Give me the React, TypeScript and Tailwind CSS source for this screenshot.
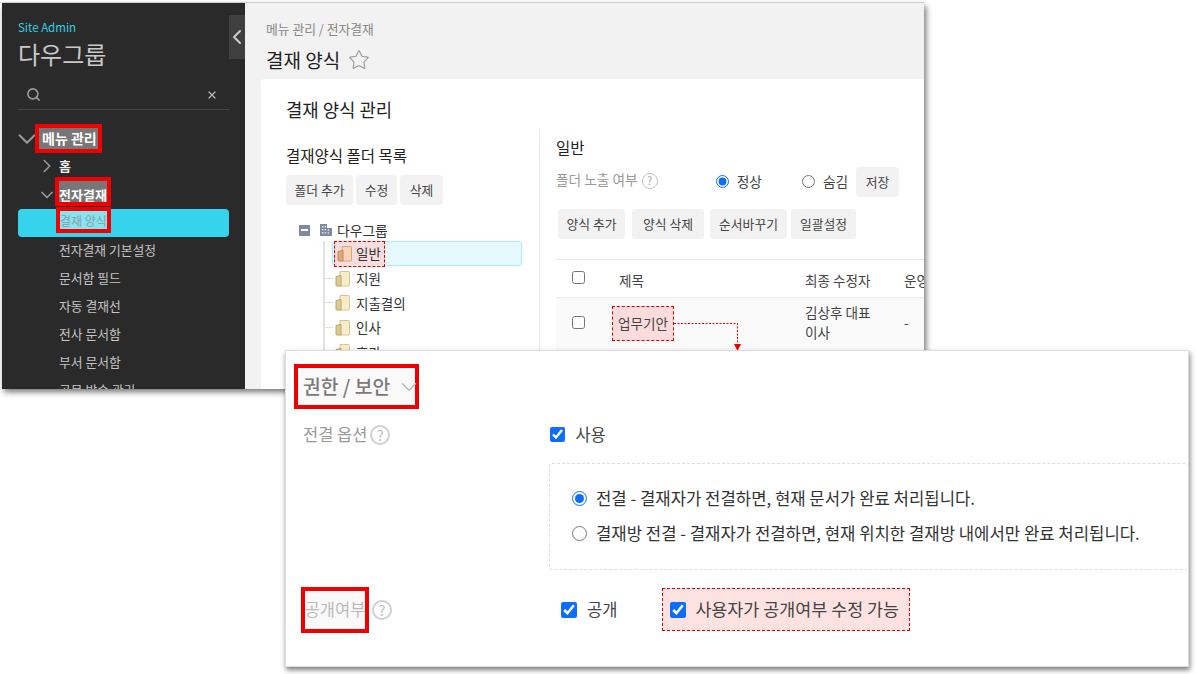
import React from "react";
import { ChevronDown, ChevronLeft, ChevronRight, Search, Star, X } from "lucide-react";

const font = { fontFamily: '"Noto Sans CJK KR", "Noto Sans", sans-serif' };

const GrayButton = ({ label, className }: { label: string; className: string }) => (
  <button type="button" className={`h-[30px] rounded-[4px] bg-[#f2f2f2] text-[12.8px] text-[#444] ${className}`}>
    {label}
  </button>
);

const Help = ({ size = "md" }: { size?: "sm" | "md" }) => (
  <span
    className={
      size === "sm"
        ? "inline-flex h-[16px] w-[16px] items-center justify-center rounded-full border border-[#c4c4c4] text-[11px] leading-none text-[#aaa]"
        : "inline-flex h-[20px] w-[20px] items-center justify-center rounded-full border-2 border-[#d0d0d0] text-[14px] leading-none text-[#bbb]"
    }
  >
    ?
  </span>
);

const FolderIcon = ({ active }: { active?: boolean }) => (
  <svg width="16" height="17" viewBox="0 0 16 17" className="shrink-0">
    <path d="M5 1.5h8.5a1 1 0 0 1 1 1V15a1 1 0 0 1-1 1H5z" fill={active ? "#f6d3b4" : "#f8edc8"} stroke={active ? "#d2a680" : "#d2c498"} />
    <path d="M1 6.5l5-1V16H2a1 1 0 0 1-1-1z" fill={active ? "#e3a878" : "#dcc98c"} stroke={active ? "#c08a60" : "#b9a670"} />
  </svg>
);

const BuildingIcon = () => (
  <svg width="14" height="14" viewBox="0 0 14 14" className="shrink-0">
    <path d="M1 1h7v4h5v8H1z" fill="#7f8aa0" />
    <g fill="#e6e8ee">
      <rect x="3" y="3" width="1.4" height="1.4" />
      <rect x="5.6" y="3" width="1.4" height="1.4" />
      <rect x="3" y="6" width="1.4" height="1.4" />
      <rect x="5.6" y="6" width="1.4" height="1.4" />
      <rect x="8.6" y="6.5" width="1.4" height="1.4" />
      <rect x="3" y="9" width="1.4" height="1.4" />
      <rect x="5.6" y="9" width="1.4" height="1.4" />
      <rect x="8.6" y="9.5" width="1.4" height="1.4" />
    </g>
  </svg>
);

const treeItems = ["지원", "지출결의", "인사", "휴가"];
const sideItems = ["전자결재 기본설정", "문서함 필드", "자동 결재선", "전사 문서함", "부서 문서함", "공문 발송 관리"];

const Sidebar = () => (
  <aside className="h-full w-[243px] shrink-0 overflow-hidden bg-[#2a2a2a] pl-[16px] pr-[16px]">
    <div className="pt-[15px] text-[11.5px] leading-[18px] text-[#36cfe4]">Site Admin</div>
    <div className="text-[24px] leading-[36px] text-[#c9c9c9]">다우그룹</div>
    <div className="mt-[8px] flex h-[30px] items-center justify-between border-b border-[#444] pl-[8px] pr-[11px]">
      <Search size={15} strokeWidth={2.6} className="text-[#9a9a9a]" />
      <X size={12} strokeWidth={2.5} className="text-[#b5b5b5]" />
    </div>
    <div className="mt-[14px] flex h-[29px] items-center">
      <ChevronDown size={30} strokeWidth={1.6} className="ml-[-6px] mr-[-7px] shrink-0 text-[#999]" />
      <span className="w-[67px] whitespace-nowrap border-[4px] border-[#f00000] bg-[#777] pl-[3px] text-[14px] font-bold leading-[21px] text-white">메뉴 관리</span>
    </div>
    <div className="flex h-[27px] items-center pb-[2px] pl-[18px]">
      <ChevronRight size={22} strokeWidth={1.7} className="shrink-0 text-[#999]" />
      <span className="ml-[1px] text-[13px] font-bold text-[#eee]">홈</span>
    </div>
    <div className="flex h-[29px] items-center pl-[19px]">
      <ChevronDown size={20} className="mr-[-2px] shrink-0 text-[#999]" />
      <span className="mb-[7px] h-[29px] w-[56px] overflow-hidden whitespace-nowrap border-[4px] border-[#f00000] bg-[#777] pt-[7px] text-[13px] font-bold leading-[14px] text-white">전자결재</span>
    </div>
    <div className="flex h-[28px] items-center rounded-[4px] bg-[#36d3ec] pl-[38px]">
      <span className="mb-[6px] h-[26px] w-[55px] overflow-hidden whitespace-nowrap border-[4px] border-[#f00000] bg-[#84e4f2] pt-[2px] text-[12px] leading-[16px] text-[#8a9fa5]">결재 양식</span>
    </div>
    {sideItems.map((item) => (
      <div key={item} className="flex h-[28px] items-center pb-[3px] pl-[41px] text-[12.8px] text-[#c4c4c4]">
        {item}
      </div>
    ))}
  </aside>
);

const FolderPanel = () => (
  <div className="w-[253px] shrink-0">
    <div className="mt-[15px] text-[15.5px] leading-[22px] text-[#222]">결재양식 폴더 목록</div>
    <div className="mt-[9px] flex gap-[3px]">
      <GrayButton label="폴더 추가" className="w-[67px]" />
      <GrayButton label="수정" className="w-[41px]" />
      <GrayButton label="삭제" className="w-[43px]" />
    </div>
    <div className="ml-[13px] mt-[14px] flex h-[22px] items-center text-[13.8px] text-[#333]">
      <span className="flex h-[11px] w-[11px] items-center justify-center bg-[#7f8aa0]">
        <span className="h-[2px] w-[7px] bg-white" />
      </span>
      <span className="ml-[9px]"><BuildingIcon /></span>
      <span className="ml-[4px]">다우그룹</span>
    </div>
    <div className="ml-[37px] border-l-2 border-[#e2e2e2]">
      <div className="ml-[7px] flex h-[25px] w-[190px] items-center rounded-[3px] border border-[#a5eefa] bg-[#e6fafd]">
        <span className="ml-[1px] flex h-[26px] items-center gap-[3px] border border-dashed border-[#e00000] bg-[#f6dede] pl-[2px] pr-[3px] text-[13.5px] text-[#333]">
          <FolderIcon active />
          일반
        </span>
      </div>
      {treeItems.map((item) => (
        <div key={item} className="flex h-[24.5px] items-center text-[13.5px] text-[#333]">
          <span className="h-px w-[9px] bg-[#e2e2e2]" />
          <span className="ml-[1px] mr-[5px]"><FolderIcon /></span>
          {item}
        </div>
      ))}
    </div>
  </div>
);

const FormPanel = () => (
  <div className="min-w-[400px] flex-1 border-l border-[#e6e6e6] pl-[16px]">
    <div className="mt-[7px] text-[15.5px] leading-[22px] text-[#222]">일반</div>
    <div className="mt-[8px] flex h-[30px] items-center text-[13.7px]">
      <span className="mb-[3px] text-[#999]">폴더 노출 여부</span>
      <span className="mb-[3px] ml-[4px]"><Help size="sm" /></span>
      <input type="radio" checked readOnly className="ml-[58px] h-[13px] w-[13px] accent-[#0d6efd]" />
      <span className="ml-[8px] text-[#444]">정상</span>
      <input type="radio" readOnly checked={false} className="ml-[40px] h-[13px] w-[13px]" />
      <span className="ml-[8px] text-[#444]">숨김</span>
      <GrayButton label="저장" className="ml-[8px] mt-[2px] w-[43px]" />
    </div>
    <div className="ml-[2px] mt-[13px] flex">
      <GrayButton label="양식 추가" className="w-[67px]" />
      <GrayButton label="양식 삭제" className="ml-[7px] w-[72px]" />
      <GrayButton label="순서바꾸기" className="ml-[6px] w-[77px]" />
      <GrayButton label="일괄설정" className="ml-[4px] w-[65px]" />
    </div>
    <div className="mt-[20px] border-t border-[#e8e8e8]">
      <div className="flex h-[38px] items-center border-b border-[#eee] text-[13.6px] text-[#444]">
        <input type="checkbox" readOnly checked={false} className="mb-[2px] ml-[16px] h-[13px] w-[13px]" />
        <span className="ml-[34px] w-[186px] pt-[4px]">제목</span>
        <span className="w-[99px] whitespace-nowrap pt-[4px]">최종 수정자</span>
        <span className="whitespace-nowrap pt-[4px]">운영</span>
      </div>
      <div className="flex h-[54px] items-start bg-[#fafafa] text-[13.6px] text-[#444]">
        <input type="checkbox" readOnly checked={false} className="ml-[16px] mt-[18px] h-[13px] w-[13px]" />
        <span className="ml-[27px] mt-[8px] flex h-[35px] w-[62px] items-center justify-center border border-dashed border-[#e00000] bg-[#fbdcdc]">업무기안</span>
        <span className="ml-[131px] mr-[24px] mt-[4px] w-[75px] leading-[20px]">김상후 대표 이사</span>
        <span className="mt-[14px]">-</span>
      </div>
    </div>
  </div>
);

const AdminWindow = () => (
  <div className="absolute left-[2px] top-[3px] flex h-[386px] w-[922px] overflow-hidden bg-[#f2f2f2] shadow-[2px_3px_6px_rgba(0,0,0,0.55)]">
    <Sidebar />
    <div className="w-[16px] shrink-0 bg-[#f2f2f2]" />
    <main className="min-w-0 flex-1 overflow-hidden">
      <div className="h-[76px] pl-[5px]">
        <div className="pt-[17px] text-[12.8px] leading-[18px] text-[#888]">메뉴 관리 / 전자결재</div>
        <div className="mt-[9px] flex items-center text-[19px] leading-[26px] text-[#222]">
          결재 양식
          <Star size={22} strokeWidth={1.2} className="ml-[8px] text-[#999]" />
        </div>
      </div>
      <div className="h-full rounded-tl-[4px] bg-white pl-[25px]">
        <div className="pt-[18px] text-[17.8px] leading-[24px] text-[#222]">결재 양식 관리</div>
        <div className="mt-[8px] flex">
          <FolderPanel />
          <FormPanel />
        </div>
      </div>
    </main>
  </div>
);

const SecurityWindow = () => (
  <div className="absolute left-[285px] top-[350px] h-[317px] w-[904px] border border-[#ddd] bg-white pl-[8px] pt-[2px] shadow-[1px_3px_5px_rgba(0,0,0,0.5)]">
    <div className="mt-[11px] flex h-[45px] w-[125px] items-center whitespace-nowrap border-[4px] border-[#f00000] bg-[#f9f9f9] pl-[5px] text-[19.3px] font-medium text-[#7a7a7a]">
      권한 / 보안
      <ChevronDown size={26} strokeWidth={1.4} className="ml-[6px] shrink-0 text-[#bbb]" />
    </div>
    <div className="mt-[12px] flex h-[26px] items-center pl-[9px] text-[16.5px]">
      <span className="text-[#999]">전결 옵션</span>
      <span className="ml-[3px]"><Help /></span>
      <input type="checkbox" checked readOnly className="ml-[160px] h-[15px] w-[15px] accent-[#0d6efd]" />
      <span className="ml-[10px] text-[#444]">사용</span>
    </div>
    <div className="ml-[255px] mt-[16px] h-[107px] rounded-[3px] border border-r-0 border-dashed border-[#ddd] pl-[22px] pt-[17px] text-[16.7px] text-[#333]">
      <div className="flex h-[35px] items-center">
        <input type="radio" checked readOnly className="h-[15px] w-[15px] accent-[#0d6efd]" />
        <span className="ml-[9px] whitespace-nowrap">전결 - 결재자가 전결하면, 현재 문서가 완료 처리됩니다.</span>
      </div>
      <div className="flex h-[35px] items-center">
        <input type="radio" readOnly checked={false} className="h-[15px] w-[15px]" />
        <span className="ml-[9px] whitespace-nowrap">결재방 전결 - 결재자가 전결하면, 현재 위치한 결재방 내에서만 완료 처리됩니다.</span>
      </div>
    </div>
    <div className="mt-[16px] flex h-[47px] items-center pl-[7px] text-[16.5px]">
      <span className="flex h-[46px] w-[68px] items-center justify-center whitespace-nowrap border-[4px] border-[#f00000] bg-[#f9f9f9] text-[#bbb]">공개여부</span>
      <span className="ml-[3px]"><Help /></span>
      <input type="checkbox" checked readOnly className="ml-[169px] h-[16px] w-[16px] accent-[#0d6efd]" />
      <span className="ml-[10px] text-[#444]">공개</span>
      <div className="ml-[45px] flex h-[43px] w-[248px] items-center border border-dashed border-[#e00000] bg-[#fde2e2] pl-[7px]">
        <input type="checkbox" checked readOnly className="h-[16px] w-[16px] accent-[#0d6efd]" />
        <span className="ml-[9px] whitespace-nowrap text-[17.4px] text-[#444]">사용자가 공개여부 수정 가능</span>
      </div>
    </div>
  </div>
);

// dashed line from 업무기안 cell down to the lower window
const Connector = () => (
  <svg className="absolute left-[672px] top-[318px]" width="72" height="36" viewBox="0 0 72 36">
    <path d="M2 5.5H65.5V28" fill="none" stroke="#f00000" strokeDasharray="2 1.5" />
    <path d="M62 26h7l-3.5 7z" fill="#f00000" />
  </svg>
);

export default function App() {
  return (
    <div style={font} className="relative h-[674px] w-[1196px] overflow-hidden bg-white">
      <div className="mt-[2px] h-px w-[924px] bg-[#ddd]" />
      <AdminWindow />
      <Connector />
      <SecurityWindow />
      <button type="button" className="absolute left-[229px] top-[15px] flex h-[44px] w-[16px] items-center justify-center bg-[#3f3f3f] text-[#ccc]">
        <ChevronLeft size={24} className="shrink-0" />
      </button>
    </div>
  );
}
